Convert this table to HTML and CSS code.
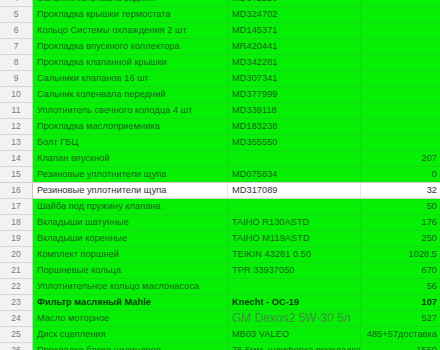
FILE: index.html
```html
<!DOCTYPE html>
<html>
<head>
<meta charset="utf-8">
<link rel="stylesheet" href="styles.css">
</head>
<body>
<div class="sheet">
  <div class="row"><div class="num">4</div><div class="cell">Сальник коленвала задний</div><div class="cell">MD372250</div><div class="cell val"></div></div>
  <div class="row"><div class="num">5</div><div class="cell">Прокладка крышки термостата</div><div class="cell">MD324702</div><div class="cell val"></div></div>
  <div class="row"><div class="num">6</div><div class="cell">Кольцо Системы охлаждения 2 шт</div><div class="cell">MD145371</div><div class="cell val"></div></div>
  <div class="row"><div class="num">7</div><div class="cell">Прокладка впускного коллектора</div><div class="cell">MR420441</div><div class="cell val"></div></div>
  <div class="row"><div class="num">8</div><div class="cell">Прокладка клапанной крышки</div><div class="cell">MD342281</div><div class="cell val"></div></div>
  <div class="row"><div class="num">9</div><div class="cell">Сальники клапанов 16 шт</div><div class="cell">MD307341</div><div class="cell val"></div></div>
  <div class="row"><div class="num">10</div><div class="cell">Сальник коленвала передний</div><div class="cell">MD377999</div><div class="cell val"></div></div>
  <div class="row"><div class="num">11</div><div class="cell">Уплотнитель свечного колодца 4 шт</div><div class="cell">MD339118</div><div class="cell val"></div></div>
  <div class="row"><div class="num">12</div><div class="cell">Прокладка маслоприемника</div><div class="cell">MD183238</div><div class="cell val"></div></div>
  <div class="row"><div class="num">13</div><div class="cell">Болт ГБЦ</div><div class="cell">MD355550</div><div class="cell val"></div></div>
  <div class="row"><div class="num">14</div><div class="cell">Клапан впускной</div><div class="cell"></div><div class="cell val">207</div></div>
  <div class="row"><div class="num">15</div><div class="cell">Резиновые уплотнители щупа</div><div class="cell">MD075834</div><div class="cell val">0</div></div>
  <div class="row white"><div class="num">16</div><div class="cell">Резиновые уплотнители щупа</div><div class="cell">MD317089</div><div class="cell val">32</div></div>
  <div class="row"><div class="num">17</div><div class="cell">Шайба под пружину клапана</div><div class="cell"></div><div class="cell val">50</div></div>
  <div class="row"><div class="num">18</div><div class="cell">Вкладыши шатунные</div><div class="cell">TAIHO R130ASTD</div><div class="cell val">176</div></div>
  <div class="row"><div class="num">19</div><div class="cell">Вкладыши коренные</div><div class="cell">TAIHO M119ASTD</div><div class="cell val">250</div></div>
  <div class="row"><div class="num">20</div><div class="cell">Комплект поршней</div><div class="cell">TEIKIN 43281 0.50</div><div class="cell val">1028.5</div></div>
  <div class="row"><div class="num">21</div><div class="cell">Поршневые кольца</div><div class="cell">TPR 33937050</div><div class="cell val">670</div></div>
  <div class="row"><div class="num">22</div><div class="cell">Уплотнительное кольцо маслонасоса</div><div class="cell"></div><div class="cell val">56</div></div>
  <div class="row bold"><div class="num">23</div><div class="cell">Фильтр масляный Mahle</div><div class="cell">Knecht - OC-19</div><div class="cell val">107</div></div>
  <div class="row"><div class="num">24</div><div class="cell">Масло моторное</div><div class="cell big">GM Dexos2 5W-30 5л</div><div class="cell val">527</div></div>
  <div class="row"><div class="num">25</div><div class="cell">Диск сцепления</div><div class="cell">MB03 VALEO</div><div class="cell val">485+57доставка</div></div>
  <div class="row"><div class="num">26</div><div class="cell">Прокладка блока цилиндров</div><div class="cell">76,5мм, шлифовка прокладка</div><div class="cell val">1550</div></div>
</div>
</body>
</html>
```

FILE: styles.css
```css
html, body {
  margin: 0;
  padding: 0;
  background: #ffffff;
  overflow: hidden;
}
body {
  width: 440px;
  height: 350px;
  font-family: "Liberation Sans", Arial, sans-serif;
}
.sheet {
  margin-top: -9px;
  display: flex;
  flex-direction: column;
}
.row {
  display: grid;
  grid-template-columns: 33px 195px 133px 80px;
  height: 16px;
  box-sizing: border-box;
  border-bottom: 1px solid #16d816;
  background: #05f005;
  color: #1e621e;
  font-size: 9.3px;
  line-height: 15px;
}
.num {
  background: #f2f2f2;
  color: #7a7a7a;
  font-size: 8.5px;
  text-align: center;
  border-right: 1px solid #c8c8c8;
  border-bottom: 1px solid #d6d6d6;
  margin-bottom: -1px;
}
.cell {
  padding: 0 3px 0 4px;
  white-space: nowrap;
  overflow: hidden;
  border-right: 1px solid #18d818;
}
.val {
  text-align: right;
  padding-right: 4px;
  border-right: none;
}
.white {
  background: #ffffff;
  color: #333;
  border-bottom: 1px solid #d0d0d0;
  box-shadow: 0 -1px 0 #d0d0d0;
}
.white .cell {
  border-right-color: #e6e6e6;
}
.bold .cell {
  font-weight: bold;
  color: #0e3e0e;
}
.big {
  font-size: 12px;
  color: #3f8f3f;
}
```
